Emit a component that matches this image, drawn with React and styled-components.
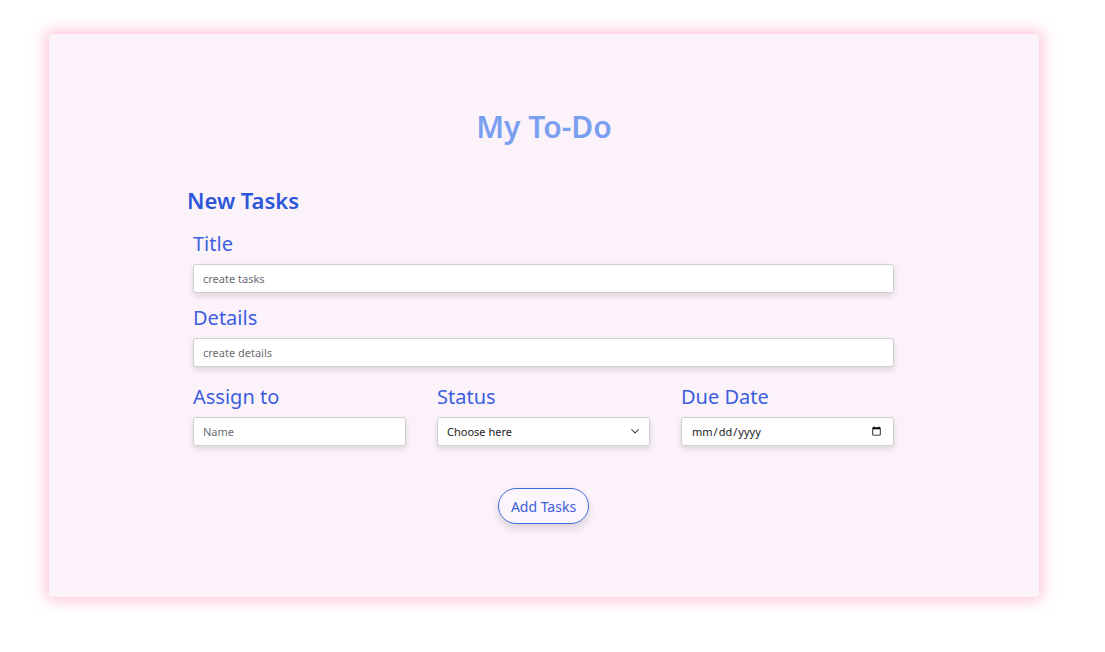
import React from "react";
import styled, { createGlobalStyle } from "styled-components";

const GlobalStyle = createGlobalStyle`
  body {
    margin: 0;
    background: #fff;
    font-family: "Noto Sans", "Open Sans", sans-serif;
  }
`;

const App = () => {
  return (
    <>
      <GlobalStyle />
      <Page>
        <Card>
          <AppTitle>My To-Do</AppTitle>
          <Form onSubmit={(e) => e.preventDefault()}>
            <FormHeading>New Tasks</FormHeading>
            <Field>
              <Label>Title</Label>
              <Input type="text" placeholder="create tasks" />
            </Field>
            <Field>
              <Label>Details</Label>
              <Input type="text" placeholder="create details" />
            </Field>
            <Row>
              <Field>
                <Label>Assign to</Label>
                <Input type="text" placeholder="Name" />
              </Field>
              <Field>
                <Label>Status</Label>
                <SelectWrap>
                  <Select defaultValue="">
                    <option value="">Choose here</option>
                    <option value="todo">To do</option>
                    <option value="doing">In progress</option>
                    <option value="done">Done</option>
                  </Select>
                  <Chevron viewBox="0 0 16 16">
                    <path
                      d="M3.5 6l4.5 4.5L12.5 6"
                      fill="none"
                      stroke="#343a40"
                      strokeWidth="1.4"
                      strokeLinecap="round"
                      strokeLinejoin="round"
                    />
                  </Chevron>
                </SelectWrap>
              </Field>
              <Field>
                <Label>Due Date</Label>
                <Input type="date" />
              </Field>
            </Row>
            <Actions>
              <AddButton type="submit">Add Tasks</AddButton>
            </Actions>
          </Form>
        </Card>
      </Page>
    </>
  );
};

export default App;

const Page = styled.div`
  padding: 34px 66px 55px 49px;
`;

const Card = styled.div`
  width: 990px;
  height: 563px;
  box-sizing: border-box;
  background: #fcf3fa;
  border-radius: 3px;
  box-shadow: 0 0 14px 4px rgba(255, 170, 195, 0.65);
  padding: 73px 0 0;
`;

const AppTitle = styled.h1`
  margin: 0;
  text-align: center;
  font-size: 30px;
  font-weight: 600;
  color: #7b9ff0;
  line-height: 40px;
`;

const Form = styled.form`
  width: 713px;
  margin: 38px auto 0 138px;
`;

const FormHeading = styled.h2`
  margin: 0 0 15px;
  font-size: 22px;
  font-weight: 600;
  color: #2d57d8;
  line-height: 30px;
`;

const Field = styled.div`
  display: flex;
  flex-direction: column;
  padding: 0 6px;
  margin-bottom: 11px;
`;

const Label = styled.label`
  font-size: 20px;
  color: #3c5ede;
  line-height: 28px;
  margin-bottom: 6px;
`;

const Input = styled.input`
  height: 29px;
  box-sizing: border-box;
  border: 1px solid #cfcfd4;
  border-radius: 3px;
  background: #fff;
  padding: 0 9px;
  font-family: "Noto Sans", "Open Sans", sans-serif;
  font-size: 11px;
  color: #222;
  box-shadow: 0 3px 6px rgba(0, 0, 0, 0.13);
  outline: none;
  &::placeholder {
    color: #6c6c76;
  }
`;

const Row = styled.div`
  display: grid;
  grid-template-columns: repeat(3, 1fr);
  column-gap: 19px;
  padding-top: 5px;
`;

const SelectWrap = styled.div`
  position: relative;
  display: flex;
`;

const Select = styled.select`
  appearance: none;
  width: 100%;
  height: 29px;
  box-sizing: border-box;
  border: 1px solid #cfcfd4;
  border-radius: 3px;
  background: #fff;
  padding: 0 9px;
  font-family: "Noto Sans", "Open Sans", sans-serif;
  font-size: 11px;
  color: #222;
  box-shadow: 0 3px 6px rgba(0, 0, 0, 0.13);
  outline: none;
`;

const Chevron = styled.svg`
  position: absolute;
  right: 9px;
  top: 8px;
  width: 12px;
  height: 12px;
  pointer-events: none;
`;

const Actions = styled.div`
  display: flex;
  justify-content: center;
  margin-top: 31px;
`;

const AddButton = styled.button`
  height: 36px;
  padding: 0 12px;
  border: 1px solid #3d6fd8;
  border-radius: 18px;
  background: #fcf5fc;
  color: #3d5ed8;
  font-family: "Noto Sans", "Open Sans", sans-serif;
  font-size: 14px;
  box-shadow: 0 4px 8px rgba(0, 0, 0, 0.15);
  cursor: pointer;
`;
